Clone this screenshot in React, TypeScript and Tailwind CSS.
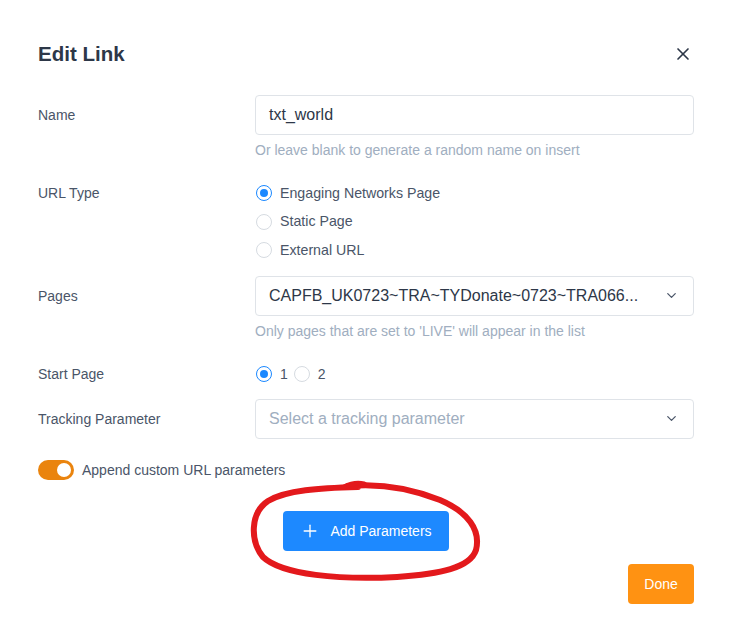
import { X, ChevronDown, Plus } from 'lucide-react'

const Radio = ({ checked }: { checked?: boolean }) => (
  <span
    className={`w-4 h-4 rounded-full border flex items-center justify-center shrink-0 ${
      checked ? 'border-[#1a88ff]' : 'border-[#d6dbe1]'
    } bg-white`}
  >
    {checked && <span className="w-2 h-2 rounded-full bg-[#1a88ff]" />}
  </span>
)

export default function App() {
  return (
    <div className="relative w-[730px] h-[641px] bg-white font-['Liberation_Sans',Arial,sans-serif] overflow-hidden">
      <div className="pl-[38px] pr-[36px] pt-[40px]">
        {/* header */}
        <div className="flex items-center justify-between h-7">
          <h1 className="text-[20.5px] font-bold text-[#2d3748]">Edit Link</h1>
          <X size={20} strokeWidth={2} className="text-[#2d3748] mr-[1px]" />
        </div>

        {/* name */}
        <div className="grid grid-cols-[217px_1fr] mt-[27px]">
          <div className="h-10 flex items-center text-sm text-[#4a5568]">Name</div>
          <div>
            <div className="h-10 border border-[#dfe3e8] rounded px-[13px] flex items-center text-base text-[#2d3748]">
              txt_world
            </div>
            <div className="mt-[5px] text-sm leading-5 text-[#a0aec0]">
              Or leave blank to generate a random name on insert
            </div>
          </div>
        </div>

        {/* url type */}
        <div className="grid grid-cols-[217px_1fr] mt-[19px]">
          <div className="h-[28px] flex items-center text-sm text-[#4a5568]">URL Type</div>
          <div className="flex flex-col">
            {['Engaging Networks Page', 'Static Page', 'External URL'].map((t, i) => (
              <div key={t} className="h-[28.5px] flex items-center gap-2 pl-px text-[14.2px] text-[#4a5568]">
                <Radio checked={i === 0} />
                <span>{t}</span>
              </div>
            ))}
          </div>
        </div>

        {/* pages */}
        <div className="grid grid-cols-[217px_1fr] mt-[11px]">
          <div className="h-10 flex items-center text-sm text-[#4a5568]">Pages</div>
          <div>
            <div className="h-10 border border-[#dfe3e8] rounded pl-[13px] pr-[14px] flex items-center justify-between text-base text-[#2d3748]">
              <span className="truncate">CAPFB_UK0723~TRA~TYDonate~0723~TRA066...</span>
              <ChevronDown size={15} strokeWidth={2} className="text-[#4a5568] shrink-0 ml-3" />
            </div>
            <div className="mt-[5px] text-sm leading-5 text-[#a0aec0]">
              Only pages that are set to 'LIVE' will appear in the list
            </div>
          </div>
        </div>

        {/* start page */}
        <div className="grid grid-cols-[217px_1fr] mt-[19px]">
          <div className="h-7 flex items-center text-sm text-[#4a5568]">Start Page</div>
          <div className="h-7 flex items-center pl-px text-sm text-[#4a5568]">
            <Radio checked />
            <span className="ml-2">1</span>
            <span className="ml-[6px]">
              <Radio />
            </span>
            <span className="ml-2">2</span>
          </div>
        </div>

        {/* tracking */}
        <div className="grid grid-cols-[217px_1fr] mt-[11px]">
          <div className="h-10 flex items-center text-sm text-[#4a5568]">Tracking Parameter</div>
          <div className="h-10 border border-[#dfe3e8] rounded pl-[13px] pr-[14px] flex items-center justify-between text-base text-[#a0aec0]">
            <span>Select a tracking parameter</span>
            <ChevronDown size={15} strokeWidth={2} className="text-[#4a5568]" />
          </div>
        </div>

        {/* toggle */}
        <div className="flex items-center gap-2 mt-[21px] h-5">
          <span className="w-9 h-5 rounded-full bg-[#ea840e] flex items-center justify-end pr-[3px]">
            <span className="w-[14px] h-[14px] rounded-full bg-white" />
          </span>
          <span className="text-sm text-[#4a5568]">Append custom URL parameters</span>
        </div>

        {/* add parameters */}
        <div className="flex justify-center mt-[31px]">
          <button className="w-[166px] h-10 rounded bg-[#1d89ff] text-white text-sm flex items-center justify-center gap-[10px]">
            <Plus size={20} strokeWidth={1.6} />
            <span>Add Parameters</span>
          </button>
        </div>

        {/* done */}
        <div className="flex justify-end mt-[13px]">
          <button className="w-[66px] h-10 rounded bg-[#ff9212] text-white text-sm">Done</button>
        </div>
      </div>

      {/* hand-drawn annotation */}
      <svg className="absolute inset-0 pointer-events-none" width="730" height="641" viewBox="0 0 730 641">
        <path
          d="M 358 487 C 320 488, 286 490, 268 501 C 250 513, 250 541, 263 557 C 282 575, 340 580, 397 577 C 440 574, 470 568, 476 550 C 481 530, 468 512, 440 500 C 410 488, 380 483, 348 486"
          fill="none"
          stroke="#e3191c"
          strokeWidth="6"
          strokeLinecap="round"
        />
        <path d="M 344 487 C 350 484, 356 482, 364 484" fill="none" stroke="#e3191c" strokeWidth="5" strokeLinecap="round" />
      </svg>
    </div>
  )
}
